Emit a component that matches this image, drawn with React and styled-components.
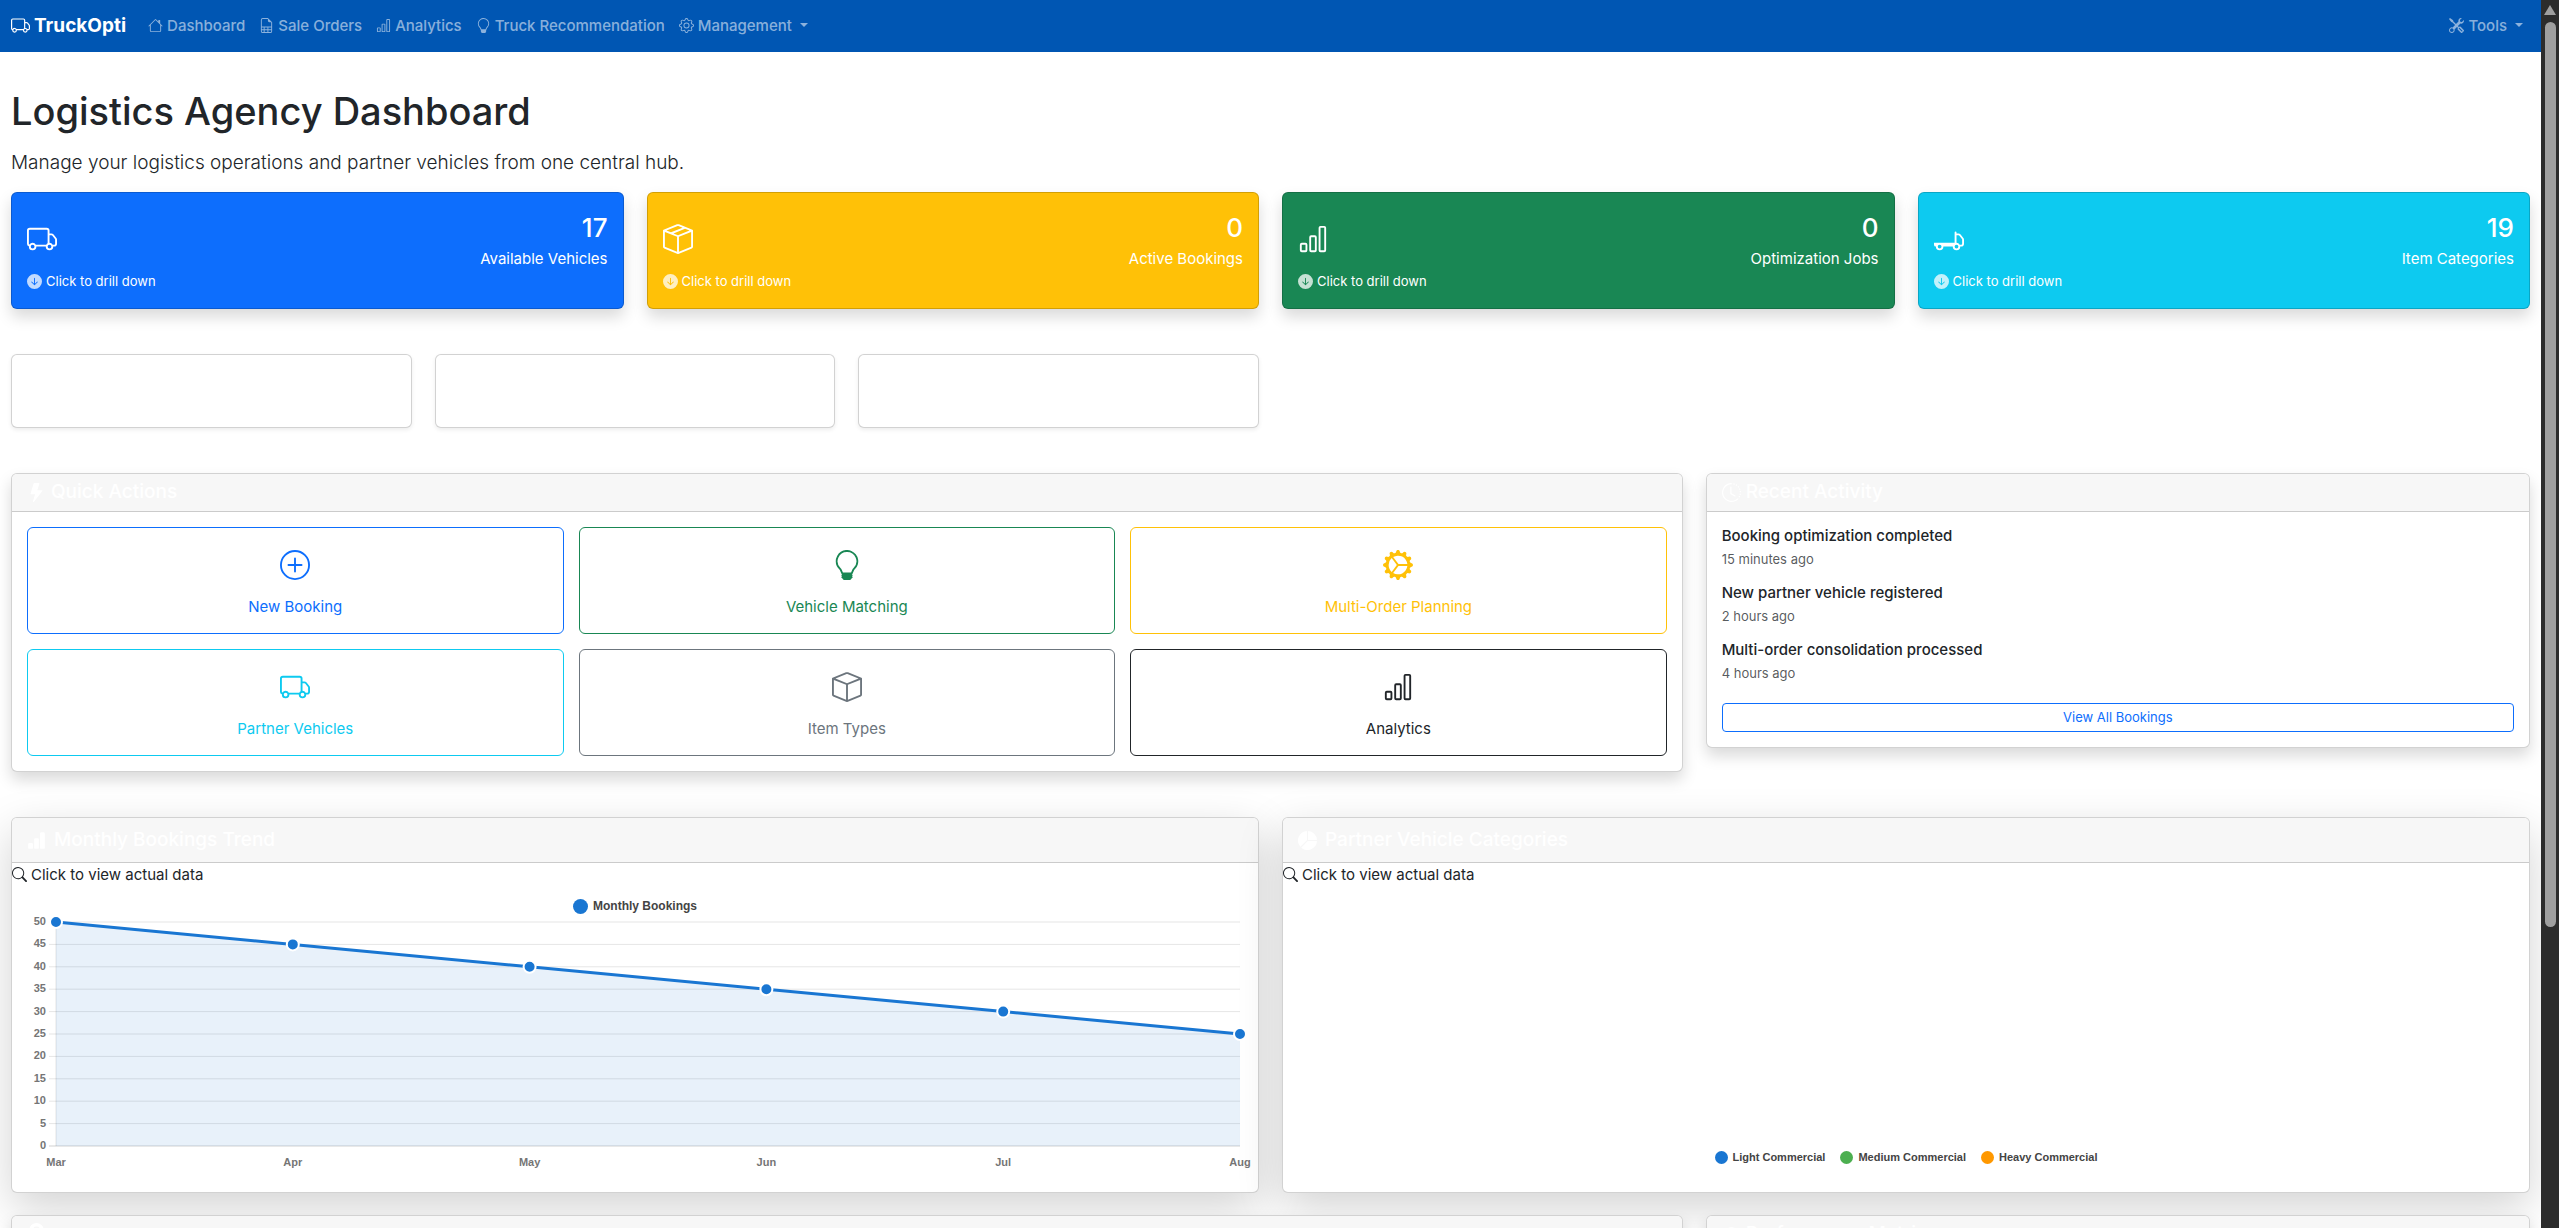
import React from "react";
import styled, { createGlobalStyle } from "styled-components";
import {
  BsTruck, BsHouse, BsFileEarmarkSpreadsheet, BsBarChart, BsBarChartFill, BsLightbulb, BsGear, BsTools,
  BsBoxSeam, BsBox, BsTruckFlatbed, BsArrowDownCircleFill, BsPlusCircle, BsGearWideConnected,
  BsLightningFill, BsClockHistory, BsPieChartFill, BsSearch, BsSpeedometer2, BsGeoAltFill,
} from "react-icons/bs";

const GlobalStyle = createGlobalStyle`
  *, *::before, *::after { box-sizing: border-box; }
  body {
    margin: 0;
    background: #fff;
    color: #212529;
    font-family: Inter, "Liberation Sans", sans-serif;
    font-size: 15px;
    line-height: 23px;
  }
  h1, h2, h3, p, ul { margin: 0; padding: 0; font-weight: 500; }
  ul { list-style: none; }
  button { font-family: inherit; cursor: pointer; }
  svg { flex: none; }
`;

const Shell = styled.div`
  display: flex;
  height: 100vh;
  overflow: hidden;
`;

const Page = styled.div`
  flex: 1;
  min-width: 0;
  overflow: hidden;
`;

const ScrollTrack = styled.div`
  display: flex;
  flex-direction: column;
  align-items: center;
  gap: 7px;
  width: 18px;
  padding-top: 5px;
  background: #2c2c2c;
`;

const ScrollArrow = styled.span`
  border: 6px solid transparent;
  border-top: 0;
  border-bottom: 10px solid #9f9f9f;
`;

const ScrollThumb = styled.span`
  width: 11px;
  height: 74%;
  border-radius: 6px;
  background: #9f9f9f;
`;

const Navbar = styled.nav`
  display: flex;
  align-items: center;
  height: 52px;
  padding: 0 11px 2px;
  background: #0056b3;
`;

const Brand = styled.a`
  display: flex;
  align-items: center;
  gap: 4px;
  margin-right: 15px;
  color: #fff;
  font-size: 19px;
  font-weight: 700;
  text-decoration: none;
`;

const NavList = styled.ul`
  display: flex;
  margin-left: ${(p) => (p.$end ? "auto" : "0")};
`;

const NavLink = styled.a`
  display: flex;
  align-items: center;
  gap: 4px;
  padding: 0 7px;
  color: rgba(255, 255, 255, 0.55);
  font-size: 15px;
  text-decoration: none;
`;

const Caret = styled.span`
  margin-left: 4px;
  border: 4px solid transparent;
  border-top-color: currentColor;
  border-bottom: 0;
`;

const Main = styled.main`
  padding: 37px 11px 22px;
`;

const Title = styled.h1`
  margin-bottom: 15px;
  font-size: 38px;
  line-height: 45px;
`;

const Lead = styled.p`
  margin-bottom: 15px;
  font-size: 19px;
  font-weight: 300;
  line-height: 28px;
`;

const Grid = styled.div`
  display: grid;
  grid-template-columns: repeat(12, 1fr);
  align-items: start;
  column-gap: 23px;
  margin-bottom: ${(p) => p.$after}px;
`;

const shadows = {
  small: "0 2px 4px rgba(0, 0, 0, 0.075)",
  medium: "0 8px 15px rgba(0, 0, 0, 0.15)",
  large: "0 15px 45px rgba(0, 0, 0, 0.175)",
};

const Card = styled.section`
  grid-column: span ${(p) => p.$span};
  min-height: ${(p) => p.$min || 0}px;
  border: 1px solid rgba(0, 0, 0, 0.175);
  border-radius: 6px;
  background: #fff;
  background-clip: border-box;
  box-shadow: ${(p) => shadows[p.$shadow]};
`;

const StatCard = styled(Card)`
  padding: 15px;
  background: ${(p) => p.$color};
  color: #fff;
`;

const StatTop = styled.div`
  display: flex;
  align-items: center;
  justify-content: space-between;
  height: 62px;
`;

const StatFigures = styled.div`
  padding-top: 3px;
  text-align: right;
`;

const StatValue = styled.h3`
  margin-bottom: 4px;
  font-size: 26px;
  line-height: 31px;
`;

const Drill = styled.div`
  display: flex;
  align-items: center;
  gap: 4px;
  font-size: 13px;
  line-height: 23px;
  svg { opacity: 0.75; }
`;

const CardHead = styled.h2`
  display: flex;
  align-items: center;
  gap: ${(p) => p.$gap || 5}px;
  padding: ${(p) => (p.$tall ? "11px" : "7px")} 15px ${(p) => (p.$tall ? "11px" : "8px")};
  border-bottom: 1px solid rgba(0, 0, 0, 0.175);
  background: #f7f7f7;
  border-radius: 5px 5px 0 0;
  color: #fff;
  font-size: 19px;
  line-height: 22px;
  svg { font-size: 19px; }
`;

const ActionGrid = styled.div`
  display: grid;
  grid-template-columns: repeat(3, 1fr);
  gap: 15px;
  padding: 15px;
`;

const ActionButton = styled.button`
  display: flex;
  flex-direction: column;
  align-items: center;
  gap: 15px;
  padding: 22px 15px 15px;
  border: 1px solid ${(p) => p.$color};
  border-radius: 6px;
  background: transparent;
  color: ${(p) => p.$color};
  font-size: 15px;
  line-height: 23px;
`;

const ActivityBody = styled.div`
  padding: 15px;
`;

const ActivityItem = styled.li`
  margin-bottom: 15px;
`;

const ActivityName = styled.h3`
  margin-bottom: 4px;
  font-size: 15px;
  line-height: 18px;
`;

const ActivityTime = styled.p`
  color: rgba(33, 37, 41, 0.75);
  font-size: 13px;
  font-weight: 400;
  line-height: 20px;
`;

const OutlineButton = styled.button`
  display: block;
  width: 100%;
  margin-top: 20px;
  padding: 4px 8px;
  border: 1px solid #0d6efd;
  border-radius: 4px;
  background: transparent;
  color: #0d6efd;
  font-size: 13px;
  line-height: 19px;
`;

const DataHint = styled.div`
  display: flex;
  align-items: center;
  gap: 4px;
  height: 22px;
`;

const Legend = styled.div`
  display: flex;
  justify-content: center;
  gap: 15px;
  font-family: "Liberation Sans", Arial, sans-serif;
  font-size: ${(p) => (p.$small ? 11 : 12)}px;
  font-weight: 700;
  line-height: 15px;
  color: #444;
`;

const LegendItem = styled.span`
  display: flex;
  align-items: center;
  gap: 5px;
  &::before {
    content: "";
    width: ${(p) => p.$size}px;
    height: ${(p) => p.$size}px;
    border-radius: 50%;
    background: ${(p) => p.$color};
  }
`;

const ChartBody = styled.div`
  height: 307px;
  padding-top: 14px;
`;

const PlotArea = styled.div`
  padding: 8px 18px 0 44px;
`;

const PieBody = styled.div`
  display: flex;
  flex-direction: column;
  justify-content: flex-end;
  height: 307px;
  padding-bottom: 27px;
`;

const Plot = styled.svg`
  display: block;
  width: 100%;
  height: 224px;
  overflow: visible;
  font-family: "Liberation Sans", Arial, sans-serif;
  font-size: 11px;
  font-weight: 700;
  fill: #757575;
`;

const stats = [
  { value: 17, label: "Available Vehicles", color: "#0d6efd", Icon: BsTruck },
  { value: 0, label: "Active Bookings", color: "#ffc107", Icon: BsBoxSeam },
  { value: 0, label: "Optimization Jobs", color: "#198754", Icon: BsBarChart },
  { value: 19, label: "Item Categories", color: "#0dcaf0", Icon: BsTruckFlatbed },
];

const actions = [
  { label: "New Booking", color: "#0d6efd", Icon: BsPlusCircle },
  { label: "Vehicle Matching", color: "#198754", Icon: BsLightbulb },
  { label: "Multi-Order Planning", color: "#ffc107", Icon: BsGearWideConnected },
  { label: "Partner Vehicles", color: "#0dcaf0", Icon: BsTruck },
  { label: "Item Types", color: "#6c757d", Icon: BsBox },
  { label: "Analytics", color: "#212529", Icon: BsBarChart },
];

const activity = [
  ["Booking optimization completed", "15 minutes ago"],
  ["New partner vehicle registered", "2 hours ago"],
  ["Multi-order consolidation processed", "4 hours ago"],
];

const links = [
  { label: "Dashboard", Icon: BsHouse },
  { label: "Sale Orders", Icon: BsFileEarmarkSpreadsheet },
  { label: "Analytics", Icon: BsBarChart },
  { label: "Truck Recommendation", Icon: BsLightbulb },
  { label: "Management", Icon: BsGear, menu: true },
];

const bookings = [["Mar", 50], ["Apr", 45], ["May", 40], ["Jun", 35], ["Jul", 30], ["Aug", 25]];
const ticks = [50, 45, 40, 35, 30, 25, 20, 15, 10, 5, 0];

function NavItem({ label, Icon, menu }) {
  return (
    <li>
      <NavLink href="#">
        <Icon />
        {label}
        {menu && <Caret />}
      </NavLink>
    </li>
  );
}

function TrendChart() {
  const pct = (n) => `${n}%`;
  const pts = bookings.map(([month, value], i) => ({ month, x: i * 20, y: 100 - value * 2 }));
  return (
    <Plot>
      {ticks.map((t) => (
        <g key={t}>
          <line x1="-7" x2="100%" y1={pct(100 - t * 2)} y2={pct(100 - t * 2)} stroke="#000" strokeOpacity={t ? 0.1 : 0.18} />
          <text x="-10" y={pct(100 - t * 2)} dy="3" textAnchor="end">{t}</text>
        </g>
      ))}
      <line x1="0" x2="0" y1="0" y2="100%" stroke="#000" strokeOpacity="0.1" />
      <svg width="100%" height="100%" viewBox="0 0 100 100" preserveAspectRatio="none" overflow="visible">
        <polygon points={`0,100 ${pts.map((p) => `${p.x},${p.y}`).join(" ")} 100,100`} fill="#1976d2" fillOpacity="0.1" />
      </svg>
      {pts.slice(1).map((p, i) => (
        <line key={p.month} x1={pct(pts[i].x)} y1={pct(pts[i].y)} x2={pct(p.x)} y2={pct(p.y)} stroke="#1976d2" strokeWidth="3" />
      ))}
      {pts.map((p) => (
        <g key={p.month}>
          <circle cx={pct(p.x)} cy={pct(p.y)} r="6" fill="#1976d2" stroke="#fff" strokeWidth="2" />
          <text x={pct(p.x)} y="100%" dy="20" textAnchor="middle">{p.month}</text>
        </g>
      ))}
    </Plot>
  );
}

export default function App() {
  return (
    <Shell>
      <GlobalStyle />
      <Page>
        <Navbar>
          <Brand href="#"><BsTruck />TruckOpti</Brand>
          <NavList>
            {links.map((l) => <NavItem key={l.label} {...l} />)}
          </NavList>
          <NavList $end>
            <NavItem label="Tools" Icon={BsTools} menu />
          </NavList>
        </Navbar>
        <Main>
          <Title>Logistics Agency Dashboard</Title>
          <Lead>Manage your logistics operations and partner vehicles from one central hub.</Lead>

          <Grid $after={45}>
            {stats.map(({ value, label, color, Icon }) => (
              <StatCard key={label} $span={3} $color={color} $shadow="medium">
                <StatTop>
                  <Icon size={30} />
                  <StatFigures>
                    <StatValue>{value}</StatValue>
                    <div>{label}</div>
                  </StatFigures>
                </StatTop>
                <Drill><BsArrowDownCircleFill size={15} />Click to drill down</Drill>
              </StatCard>
            ))}
          </Grid>

          <Grid $after={45}>
            <Card $span={2} $min={74} $shadow="small" />
            <Card $span={2} $min={74} $shadow="small" />
            <Card $span={2} $min={74} $shadow="small" />
          </Grid>

          <Grid $after={45}>
            <Card $span={8} $shadow="medium">
              <CardHead><BsLightningFill />Quick Actions</CardHead>
              <ActionGrid>
                {actions.map(({ label, color, Icon }) => (
                  <ActionButton key={label} type="button" $color={color}>
                    <Icon size={30} />
                    {label}
                  </ActionButton>
                ))}
              </ActionGrid>
            </Card>
            <Card $span={4} $shadow="medium">
              <CardHead><BsClockHistory />Recent Activity</CardHead>
              <ActivityBody>
                <ul>
                  {activity.map(([name, time]) => (
                    <ActivityItem key={name}>
                      <ActivityName>{name}</ActivityName>
                      <ActivityTime>{time}</ActivityTime>
                    </ActivityItem>
                  ))}
                </ul>
                <OutlineButton type="button">View All Bookings</OutlineButton>
              </ActivityBody>
            </Card>
          </Grid>

          <Grid $after={22}>
            <Card $span={6} $shadow="large">
              <CardHead $tall $gap={8}><BsBarChartFill />Monthly Bookings Trend</CardHead>
              <DataHint><BsSearch />Click to view actual data</DataHint>
              <ChartBody>
                <Legend><LegendItem $size={15} $color="#1976d2">Monthly Bookings</LegendItem></Legend>
                <PlotArea><TrendChart /></PlotArea>
              </ChartBody>
            </Card>
            <Card $span={6} $shadow="large">
              <CardHead $tall $gap={8}><BsPieChartFill />Partner Vehicle Categories</CardHead>
              <DataHint><BsSearch />Click to view actual data</DataHint>
              <PieBody>
                <Legend $small>
                  <LegendItem $size={13} $color="#1976d2">Light Commercial</LegendItem>
                  <LegendItem $size={13} $color="#4caf50">Medium Commercial</LegendItem>
                  <LegendItem $size={13} $color="#ff9800">Heavy Commercial</LegendItem>
                </Legend>
              </PieBody>
            </Card>
          </Grid>

          <Grid $after={22}>
            <Card $span={8} $shadow="medium">
              <CardHead><BsGeoAltFill /></CardHead>
            </Card>
            <Card $span={4} $shadow="medium">
              <CardHead><BsSpeedometer2 />Performance Metrics</CardHead>
            </Card>
          </Grid>
        </Main>
      </Page>
      <ScrollTrack>
        <ScrollArrow />
        <ScrollThumb />
      </ScrollTrack>
    </Shell>
  );
}
